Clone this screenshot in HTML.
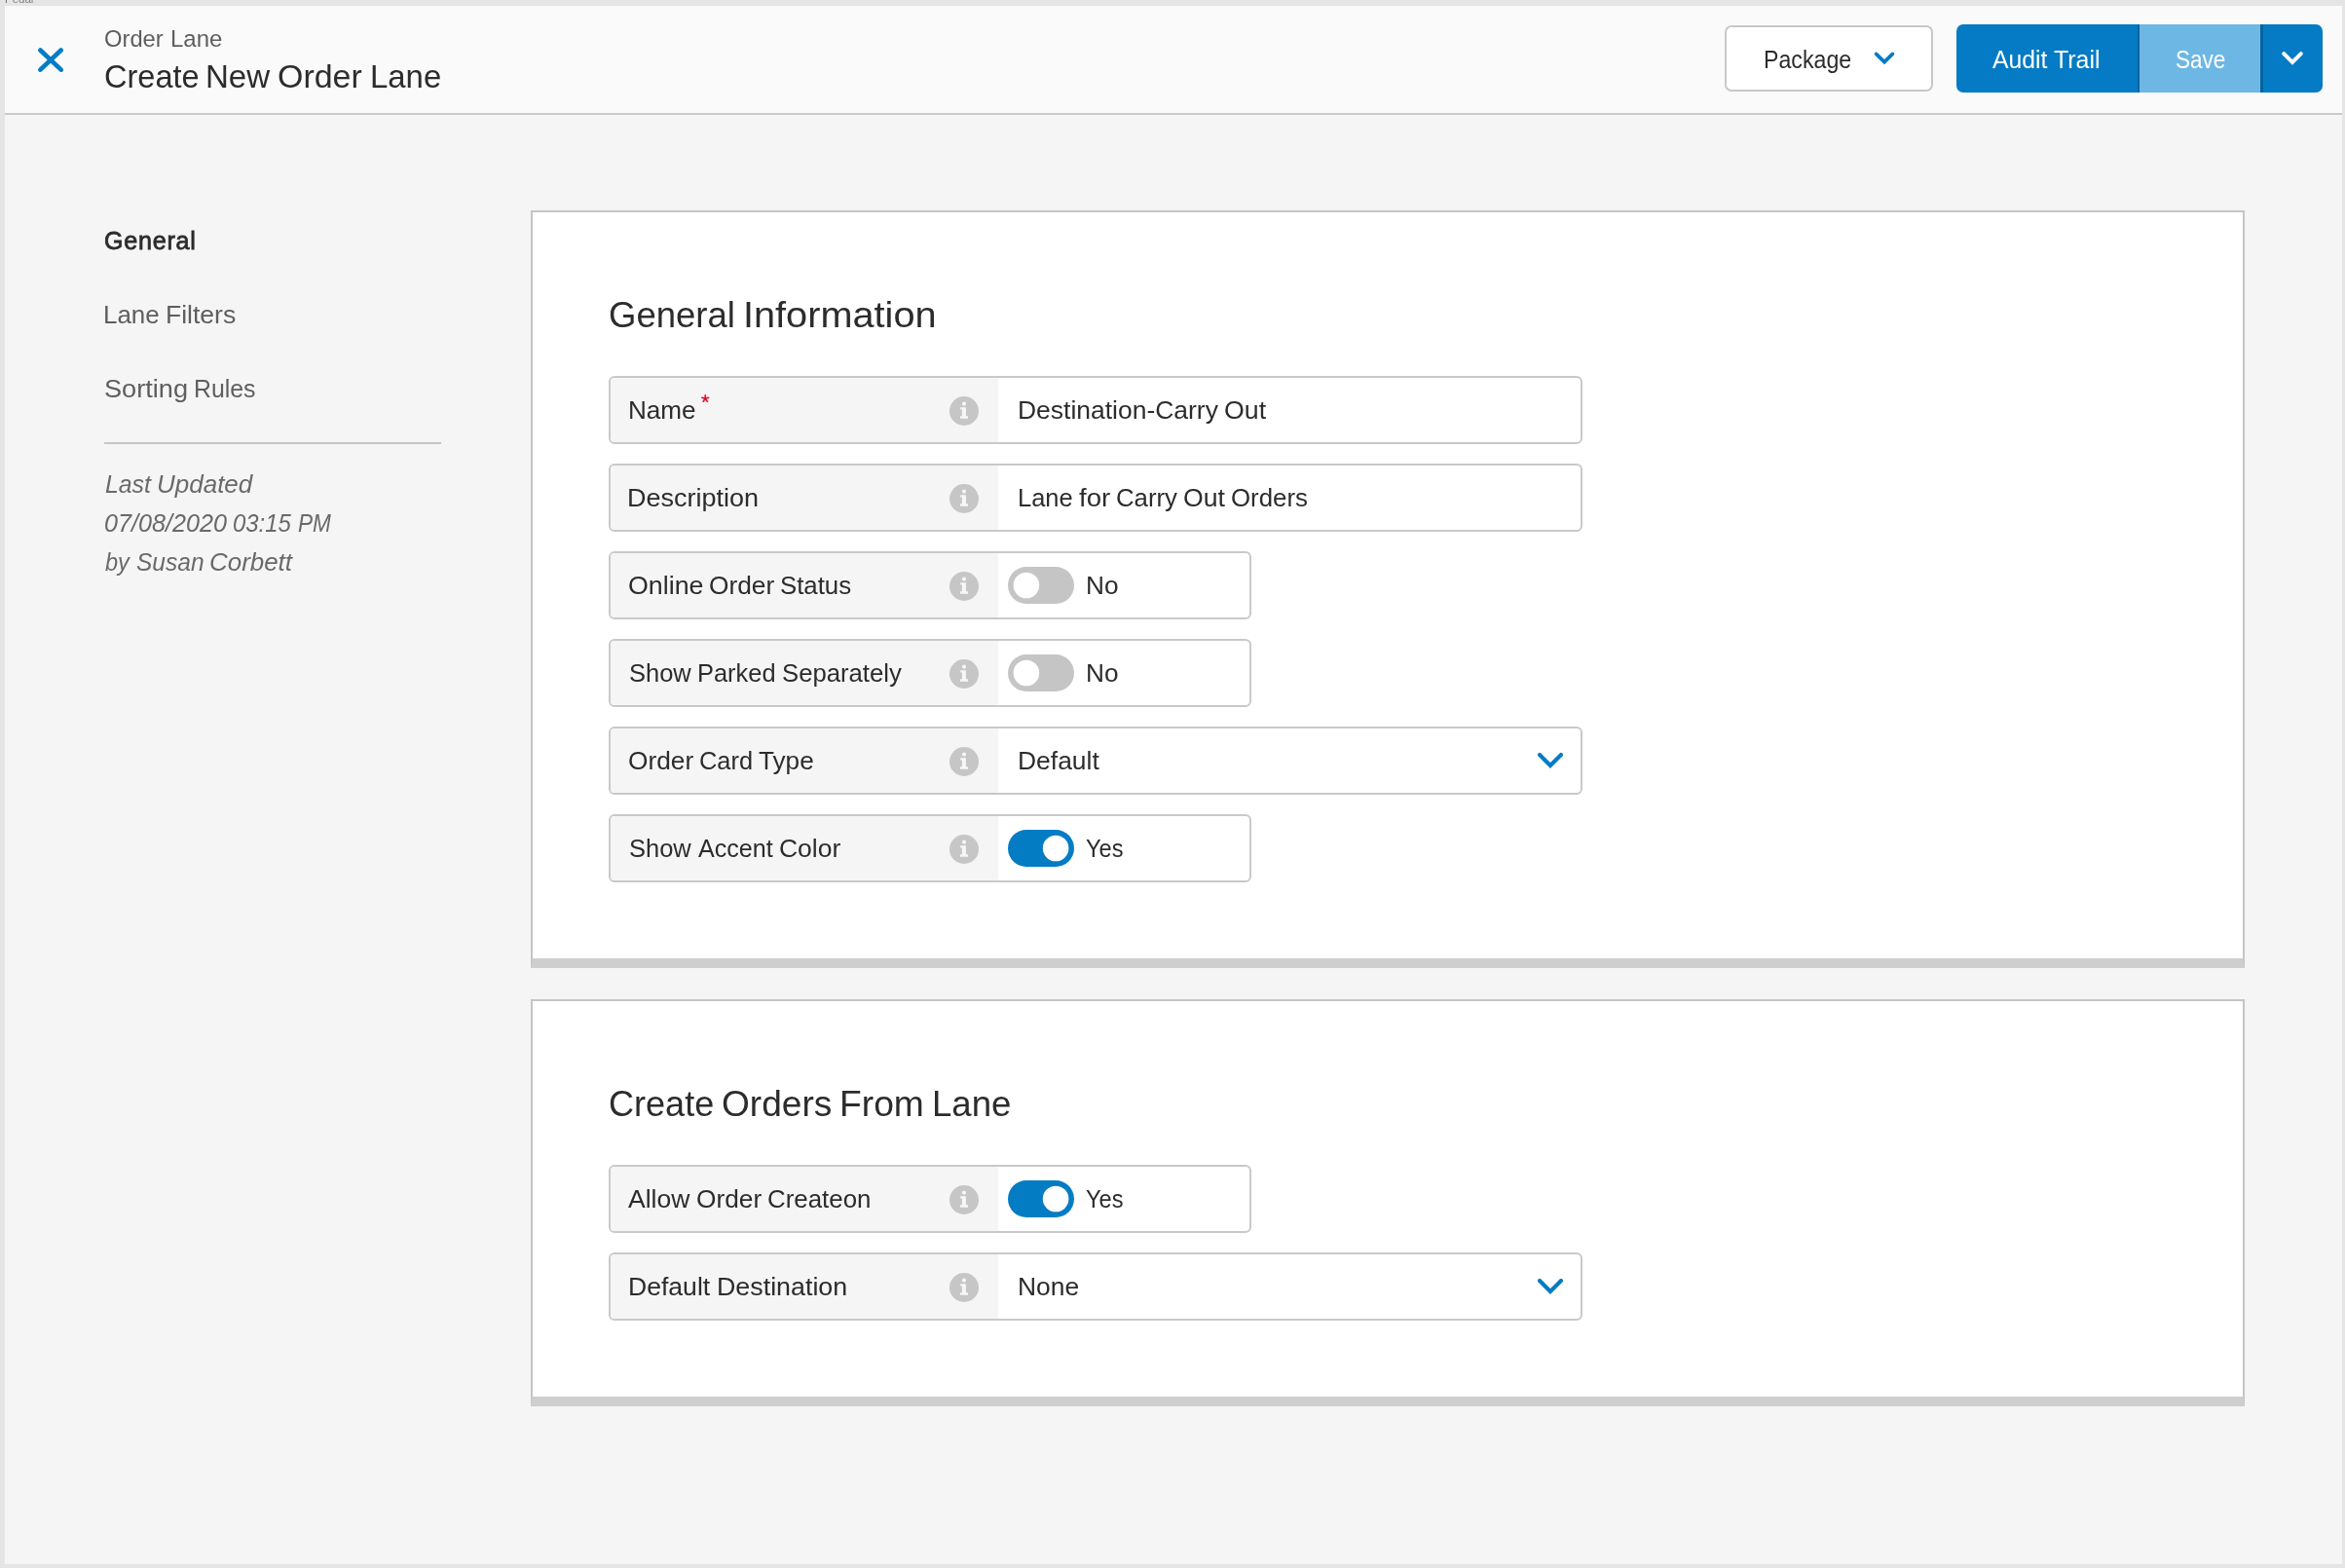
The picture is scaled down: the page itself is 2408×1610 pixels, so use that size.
<!DOCTYPE html>
<html lang="en"><head><meta charset="utf-8"><title>Create New Order Lane</title>
<style>
html,body{margin:0;padding:0;}
body{width:2408px;height:1610px;overflow:hidden;background:#e5e5e5;font-family:"Liberation Sans",sans-serif;position:relative;}
.abs{position:absolute;box-sizing:border-box;}
.t{position:absolute;white-space:nowrap;line-height:1;transform-origin:0 0;display:block;}
#app{left:5px;top:6px;width:2400px;height:1600px;background:#f5f5f5;}
#hdr{left:5px;top:6px;width:2400px;height:112px;background:#fafafa;border-bottom:2px solid #c9c9c9;}
.panel{left:545px;width:1760px;background:#fff;border:2px solid #c5c5c5;border-bottom:10px solid #cecece;}
.row{left:625px;height:70px;border:2px solid #c9c9c9;border-radius:6px;background:#fff;overflow:hidden;}
.row .lab{position:absolute;left:0;top:0;width:398px;height:66px;background:#f5f5f5;}
.w1{width:1000px;} .w2{width:660px;}
svg{position:absolute;overflow:visible;}
</style></head><body>
<div class="abs" id="app"></div>
<div class="abs" id="hdr"></div>

<svg style="left:0;top:0" width="120" height="120"><path d="M41.4 51.5 L62.7 71.6 M62.7 51.5 L41.4 71.6" stroke="#037cc4" stroke-width="4.7" stroke-linecap="round" fill="none"/></svg>
<div class="abs" style="left:1771px;top:26px;width:214px;height:68px;border:2px solid #c8c8c8;border-radius:7px;background:#fff;"></div>
<svg style="left:1900px;top:40px" width="60" height="40"><path d="M26.6 15.4 L35 23.6 L43.4 15.4" stroke="#037cc4" stroke-width="3.7" stroke-linecap="round" stroke-linejoin="miter" fill="none"/></svg>
<div class="abs" style="left:2009px;top:25px;width:376px;height:70px;border-radius:7px;background:#047bc4;overflow:hidden;"><div class="abs" style="left:186px;top:0;width:2px;height:70px;background:#05639e;"></div><div class="abs" style="left:188px;top:0;width:124px;height:70px;background:#6db7e4;"></div><div class="abs" style="left:312px;top:0;width:3px;height:70px;background:#05639e;"></div></div>
<svg style="left:2320px;top:40px" width="60" height="40"><path d="M25.2 15.2 L34 24 L42.8 15.2" stroke="#fff" stroke-width="4" stroke-linecap="round" stroke-linejoin="miter" fill="none"/></svg>
<div class="abs" style="left:107px;top:454px;width:346px;height:2px;background:#c5c5c5;"></div>
<div class="abs panel" style="top:216px;height:778px;"></div>
<div class="abs panel" style="top:1026px;height:418px;"></div>
<div class="abs row w1" style="top:386px;"><div class="lab"></div></div>
<svg style="left:975px;top:407px" width="30" height="30" viewBox="0 0 30 30"><circle cx="15" cy="15" r="15" fill="#c6c6c6"/><circle cx="15" cy="7.6" r="2.05" fill="#f7f7f7"/><path d="M11.2 11.3 H16.9 V20.2 H19 V22.8 H11 V20.2 H12.9 V13.6 H11.2 Z" fill="#f7f7f7"/></svg>
<div class="abs row w1" style="top:476px;"><div class="lab"></div></div>
<svg style="left:975px;top:497px" width="30" height="30" viewBox="0 0 30 30"><circle cx="15" cy="15" r="15" fill="#c6c6c6"/><circle cx="15" cy="7.6" r="2.05" fill="#f7f7f7"/><path d="M11.2 11.3 H16.9 V20.2 H19 V22.8 H11 V20.2 H12.9 V13.6 H11.2 Z" fill="#f7f7f7"/></svg>
<div class="abs row w2" style="top:566px;"><div class="lab"></div></div>
<svg style="left:975px;top:587px" width="30" height="30" viewBox="0 0 30 30"><circle cx="15" cy="15" r="15" fill="#c6c6c6"/><circle cx="15" cy="7.6" r="2.05" fill="#f7f7f7"/><path d="M11.2 11.3 H16.9 V20.2 H19 V22.8 H11 V20.2 H12.9 V13.6 H11.2 Z" fill="#f7f7f7"/></svg>
<svg style="left:1035px;top:582px" width="68" height="38"><rect x="0" y="0" width="68" height="38" rx="19" fill="#c5c5c5"/><circle cx="18.9" cy="19" r="13.3" fill="#fff"/></svg>
<div class="abs row w2" style="top:656px;"><div class="lab"></div></div>
<svg style="left:975px;top:677px" width="30" height="30" viewBox="0 0 30 30"><circle cx="15" cy="15" r="15" fill="#c6c6c6"/><circle cx="15" cy="7.6" r="2.05" fill="#f7f7f7"/><path d="M11.2 11.3 H16.9 V20.2 H19 V22.8 H11 V20.2 H12.9 V13.6 H11.2 Z" fill="#f7f7f7"/></svg>
<svg style="left:1035px;top:672px" width="68" height="38"><rect x="0" y="0" width="68" height="38" rx="19" fill="#c5c5c5"/><circle cx="18.9" cy="19" r="13.3" fill="#fff"/></svg>
<div class="abs row w1" style="top:746px;"><div class="lab"></div></div>
<svg style="left:975px;top:767px" width="30" height="30" viewBox="0 0 30 30"><circle cx="15" cy="15" r="15" fill="#c6c6c6"/><circle cx="15" cy="7.6" r="2.05" fill="#f7f7f7"/><path d="M11.2 11.3 H16.9 V20.2 H19 V22.8 H11 V20.2 H12.9 V13.6 H11.2 Z" fill="#f7f7f7"/></svg>
<svg style="left:1570px;top:746px" width="50" height="70"><path d="M11 29 L22 40.1 L33 29" stroke="#037cc4" stroke-width="4.2" stroke-linecap="round" stroke-linejoin="miter" fill="none"/></svg>
<div class="abs row w2" style="top:836px;"><div class="lab"></div></div>
<svg style="left:975px;top:857px" width="30" height="30" viewBox="0 0 30 30"><circle cx="15" cy="15" r="15" fill="#c6c6c6"/><circle cx="15" cy="7.6" r="2.05" fill="#f7f7f7"/><path d="M11.2 11.3 H16.9 V20.2 H19 V22.8 H11 V20.2 H12.9 V13.6 H11.2 Z" fill="#f7f7f7"/></svg>
<svg style="left:1035px;top:852px" width="68" height="38"><rect x="0" y="0" width="68" height="38" rx="19" fill="#037cc4"/><circle cx="49.1" cy="19" r="13.3" fill="#fff"/></svg>
<div class="abs row w2" style="top:1196px;"><div class="lab"></div></div>
<svg style="left:975px;top:1217px" width="30" height="30" viewBox="0 0 30 30"><circle cx="15" cy="15" r="15" fill="#c6c6c6"/><circle cx="15" cy="7.6" r="2.05" fill="#f7f7f7"/><path d="M11.2 11.3 H16.9 V20.2 H19 V22.8 H11 V20.2 H12.9 V13.6 H11.2 Z" fill="#f7f7f7"/></svg>
<svg style="left:1035px;top:1212px" width="68" height="38"><rect x="0" y="0" width="68" height="38" rx="19" fill="#037cc4"/><circle cx="49.1" cy="19" r="13.3" fill="#fff"/></svg>
<div class="abs row w1" style="top:1286px;"><div class="lab"></div></div>
<svg style="left:975px;top:1307px" width="30" height="30" viewBox="0 0 30 30"><circle cx="15" cy="15" r="15" fill="#c6c6c6"/><circle cx="15" cy="7.6" r="2.05" fill="#f7f7f7"/><path d="M11.2 11.3 H16.9 V20.2 H19 V22.8 H11 V20.2 H12.9 V13.6 H11.2 Z" fill="#f7f7f7"/></svg>
<svg style="left:1570px;top:1286px" width="50" height="70"><path d="M11 29 L22 40.1 L33 29" stroke="#037cc4" stroke-width="4.2" stroke-linecap="round" stroke-linejoin="miter" fill="none"/></svg>
<svg style="left:0;top:0" width="800" height="450"><path d="M724.25 409.35 L724.25 405.80 M724.25 409.35 L727.63 408.25 M724.25 409.35 L726.34 412.22 M724.25 409.35 L722.16 412.22 M724.25 409.35 L720.87 408.25" stroke="#e3102f" stroke-width="1.65" stroke-linecap="round" fill="none"/></svg>
<div id="txt" style="position:absolute;left:0;top:0;width:2408px;height:1610px;will-change:transform;">
<span class="t" style="left:5px;top:-6.4px;font-size:11.5px;color:#808080;">Pedal</span>
<span id="t_orderlane" style="font-size:24.3px;font-weight:400;font-style:normal;color:#5e5e5e;"><span class="t" style="left:106.89px;top:28.03px;transform:scaleX(0.9777);">Order</span> <span class="t" style="left:174.63px;top:28.03px;transform:scaleX(0.9868);">Lane</span></span>
<span id="t_title" style="font-size:33.5px;font-weight:400;font-style:normal;color:#2c2c2c;"><span class="t" style="left:106.88px;top:62.44px;transform:scaleX(0.9711);">Create</span> <span class="t" style="left:211.32px;top:62.44px;transform:scaleX(0.9860);">New</span> <span class="t" style="left:285.41px;top:62.44px;transform:scaleX(1.0131);">Order</span> <span class="t" style="left:379.93px;top:62.44px;transform:scaleX(0.9823);">Lane</span></span>
<span id="t_package" style="font-size:26px;font-weight:400;font-style:normal;color:#2c2c2c;"><span class="t" style="left:1810.99px;top:48.19px;transform:scaleX(0.8910);">Package</span></span>
<span id="t_audit" style="font-size:26px;font-weight:400;font-style:normal;color:#ffffff;"><span class="t" style="left:2046.10px;top:47.99px;transform:scaleX(0.9520);">Audit</span> <span class="t" style="left:2108.91px;top:47.99px;transform:scaleX(0.9585);">Trail</span></span>
<span id="t_save" style="font-size:26px;font-weight:400;font-style:normal;color:#ffffff;"><span class="t" style="left:2233.60px;top:47.99px;transform:scaleX(0.8677);">Save</span></span>
<span id="t_general" style="font-size:26px;font-weight:400;font-style:normal;color:#2c2c2c;-webkit-text-stroke:0.8px #2c2c2c;letter-spacing:0.8px;"><span class="t" style="left:107.02px;top:233.99px;transform:scaleX(0.9654);">General</span></span>
<span id="t_lanefilters" style="font-size:26px;font-weight:400;font-style:normal;color:#5e5e5e;"><span class="t" style="left:106.47px;top:310.19px;transform:scaleX(0.9972);">Lane</span> <span class="t" style="left:169.83px;top:310.19px;transform:scaleX(1.0201);">Filters</span></span>
<span id="t_sorting" style="font-size:26px;font-weight:400;font-style:normal;color:#5e5e5e;"><span class="t" style="left:107.45px;top:385.99px;transform:scaleX(1.0436);">Sorting</span> <span class="t" style="left:198.86px;top:385.99px;transform:scaleX(0.9555);">Rules</span></span>
<span id="t_last" style="font-size:26px;font-weight:400;font-style:italic;color:#696969;"><span class="t" style="left:107.61px;top:484.19px;transform:scaleX(0.9549);">Last</span> <span class="t" style="left:160.78px;top:484.19px;transform:scaleX(0.9995);">Updated</span></span>
<span id="t_date" style="font-size:26px;font-weight:400;font-style:italic;color:#696969;"><span class="t" style="left:107.21px;top:524.29px;transform:scaleX(0.9677);">07/08/2020</span> <span class="t" style="left:239.15px;top:524.29px;transform:scaleX(0.9190);">03:15</span> <span class="t" style="left:305.65px;top:524.29px;transform:scaleX(0.8695);">PM</span></span>
<span id="t_by" style="font-size:26px;font-weight:400;font-style:italic;color:#696969;"><span class="t" style="left:108.30px;top:563.89px;transform:scaleX(0.9042);">by</span> <span class="t" style="left:139.92px;top:563.89px;transform:scaleX(0.9438);">Susan</span> <span class="t" style="left:214.98px;top:563.89px;transform:scaleX(0.9971);">Corbett</span></span>
<span id="t_h1" style="font-size:37px;font-weight:400;font-style:normal;color:#2c2c2c;"><span class="t" style="left:624.99px;top:305.08px;transform:scaleX(0.9870);">General</span> <span class="t" style="left:762.90px;top:305.08px;transform:scaleX(1.0726);">Information</span></span>
<span id="t_name" style="font-size:26px;font-weight:400;font-style:normal;color:#2c2c2c;"><span class="t" style="left:644.66px;top:407.99px;transform:scaleX(1.0035);">Name</span></span>
<span id="t_namev" style="font-size:26px;font-weight:400;font-style:normal;color:#2c2c2c;"><span class="t" style="left:1044.93px;top:407.99px;transform:scaleX(1.0177);">Destination-Carry</span> <span class="t" style="left:1257.05px;top:407.99px;transform:scaleX(1.0275);">Out</span></span>
<span id="t_desc" style="font-size:26px;font-weight:400;font-style:normal;color:#2c2c2c;"><span class="t" style="left:644.49px;top:497.99px;transform:scaleX(1.0382);">Description</span></span>
<span id="t_descv" style="font-size:26px;font-weight:400;font-style:normal;color:#2c2c2c;"><span class="t" style="left:1045.11px;top:497.99px;transform:scaleX(0.9789);">Lane</span> <span class="t" style="left:1108.20px;top:497.99px;transform:scaleX(1.0624);">for</span> <span class="t" style="left:1145.89px;top:497.99px;transform:scaleX(0.9914);">Carry</span> <span class="t" style="left:1214.75px;top:497.99px;transform:scaleX(1.0226);">Out</span> <span class="t" style="left:1263.69px;top:497.99px;transform:scaleX(0.9932);">Orders</span></span>
<span id="t_online" style="font-size:26px;font-weight:400;font-style:normal;color:#2c2c2c;"><span class="t" style="left:644.84px;top:587.99px;transform:scaleX(1.0304);">Online</span> <span class="t" style="left:727.67px;top:587.99px;transform:scaleX(1.0121);">Order</span> <span class="t" style="left:800.99px;top:587.99px;transform:scaleX(0.9919);">Status</span></span>
<span id="t_no1" style="font-size:26px;font-weight:400;font-style:normal;color:#2c2c2c;"><span class="t" style="left:1114.85px;top:587.99px;transform:scaleX(1.0082);">No</span></span>
<span id="t_parked" style="font-size:26px;font-weight:400;font-style:normal;color:#2c2c2c;"><span class="t" style="left:645.60px;top:677.99px;transform:scaleX(0.9807);">Show</span> <span class="t" style="left:716.31px;top:677.99px;transform:scaleX(0.9773);">Parked</span> <span class="t" style="left:803.30px;top:677.99px;transform:scaleX(0.9880);">Separately</span></span>
<span id="t_no2" style="font-size:26px;font-weight:400;font-style:normal;color:#2c2c2c;"><span class="t" style="left:1114.85px;top:677.99px;transform:scaleX(1.0082);">No</span></span>
<span id="t_cardtype" style="font-size:26px;font-weight:400;font-style:normal;color:#2c2c2c;"><span class="t" style="left:644.87px;top:767.99px;transform:scaleX(1.0105);">Order</span> <span class="t" style="left:717.51px;top:767.99px;transform:scaleX(0.9762);">Card</span> <span class="t" style="left:778.79px;top:767.99px;transform:scaleX(1.0053);">Type</span></span>
<span id="t_default" style="font-size:26px;font-weight:400;font-style:normal;color:#2c2c2c;"><span class="t" style="left:1045.13px;top:767.99px;transform:scaleX(1.0169);">Default</span></span>
<span id="t_accent" style="font-size:26px;font-weight:400;font-style:normal;color:#2c2c2c;"><span class="t" style="left:645.60px;top:857.99px;transform:scaleX(0.9807);">Show</span> <span class="t" style="left:716.50px;top:857.99px;transform:scaleX(0.9651);">Accent</span> <span class="t" style="left:799.66px;top:857.99px;transform:scaleX(1.0183);">Color</span></span>
<span id="t_yes1" style="font-size:26px;font-weight:400;font-style:normal;color:#2c2c2c;"><span class="t" style="left:1114.53px;top:857.99px;transform:scaleX(0.9054);">Yes</span></span>
<span id="t_h2" style="font-size:37px;font-weight:400;font-style:normal;color:#2c2c2c;"><span class="t" style="left:625.11px;top:1114.98px;transform:scaleX(0.9748);">Create</span> <span class="t" style="left:740.76px;top:1114.98px;transform:scaleX(1.0019);">Orders</span> <span class="t" style="left:861.89px;top:1114.98px;transform:scaleX(1.0059);">From</span> <span class="t" style="left:957.34px;top:1114.98px;transform:scaleX(0.9895);">Lane</span></span>
<span id="t_allow" style="font-size:26px;font-weight:400;font-style:normal;color:#2c2c2c;"><span class="t" style="left:645.30px;top:1218.29px;transform:scaleX(1.0200);">Allow</span> <span class="t" style="left:715.27px;top:1218.29px;transform:scaleX(1.0105);">Order</span> <span class="t" style="left:787.89px;top:1218.29px;transform:scaleX(0.9954);">Createon</span></span>
<span id="t_yes2" style="font-size:26px;font-weight:400;font-style:normal;color:#2c2c2c;"><span class="t" style="left:1114.53px;top:1218.29px;transform:scaleX(0.9054);">Yes</span></span>
<span id="t_defdest" style="font-size:26px;font-weight:400;font-style:normal;color:#2c2c2c;"><span class="t" style="left:644.72px;top:1307.99px;transform:scaleX(1.0219);">Default</span> <span class="t" style="left:735.80px;top:1307.99px;transform:scaleX(1.0317);">Destination</span></span>
<span id="t_none" style="font-size:26px;font-weight:400;font-style:normal;color:#2c2c2c;"><span class="t" style="left:1045.14px;top:1307.99px;transform:scaleX(1.0157);">None</span></span>
</div>
</body></html>
